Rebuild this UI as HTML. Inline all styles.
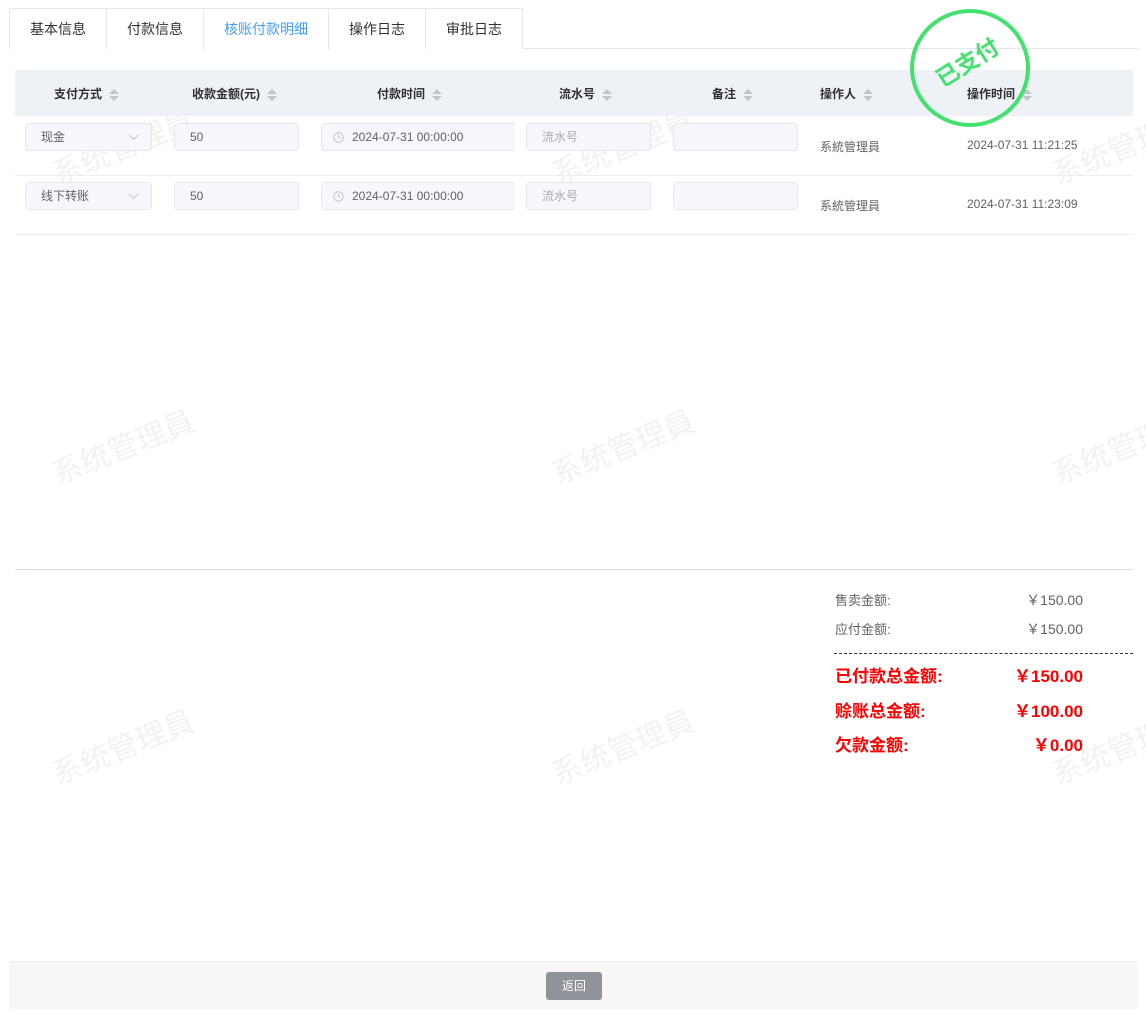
<!DOCTYPE html>
<html style="width:1146px;height:1019px;overflow:hidden"><head><meta charset="utf-8"><style>
*{box-sizing:border-box;margin:0;padding:0}
body{width:1146px;height:1019px;background:#fff;font-family:"Liberation Sans","Noto Sans CJK SC",sans-serif;position:relative;overflow:hidden;color:#606266;font-size:12px}
.abs{position:absolute}
.tab{position:absolute;top:8px;height:41px;border:1px solid #e4e7ed;border-bottom:none;font-size:14px;color:#303133;line-height:40px;text-align:center;background:#fff}
.hd{position:absolute;top:70px;left:15px;width:1118px;height:46px;background:#eef1f6}
.ht{position:absolute;top:85px;font-weight:bold;color:#303133;font-size:12px;white-space:nowrap}
.sort{display:inline-block;vertical-align:middle;margin-left:7px;width:10px;height:14px;position:relative}
.sort:before{content:"";position:absolute;left:0;top:1px;border:5px solid transparent;border-bottom-color:#c0c4cc;border-top:none}
.sort:after{content:"";position:absolute;left:0;top:8px;border:5px solid transparent;border-top-color:#c0c4cc;border-bottom:none}
.in{position:absolute;height:28px;border:1px solid #e4e7ed;border-radius:4px;background:#f5f7fa;line-height:26px;padding-left:15px;color:#606266}
.line{position:absolute;left:15px;width:1118px;height:1px;background:#ebeef5}
.wm{position:absolute;font-size:30px;color:#f2f2f2;transform:translate(-50%,-50%) rotate(-22deg);white-space:nowrap}
.lab{position:absolute;left:835px;font-size:13px;color:#606266}
.val{position:absolute;right:63px;font-size:14px;color:#606266}
.rl{position:absolute;left:835px;font-size:17px;font-weight:bold;color:#f00}
.rv{position:absolute;right:63px;font-size:17px;font-weight:bold;color:#f00}
.chev{position:absolute;right:12px;top:9px}
</style></head><body>
<div class="wm" style="left:122px;top:145px">系统管理員</div>
<div class="wm" style="left:622px;top:145px">系统管理員</div>
<div class="wm" style="left:1122px;top:145px">系统管理員</div>
<div class="wm" style="left:122px;top:445px">系统管理員</div>
<div class="wm" style="left:622px;top:445px">系统管理員</div>
<div class="wm" style="left:1122px;top:445px">系统管理員</div>
<div class="wm" style="left:122px;top:745px">系统管理員</div>
<div class="wm" style="left:622px;top:745px">系统管理員</div>
<div class="wm" style="left:1122px;top:745px">系统管理員</div>

<div class="abs" style="left:9px;top:48px;width:1129px;height:1px;background:#e4e7ed"></div>
<div class="tab" style="left:9px;width:98px">基本信息</div>
<div class="tab" style="left:106px;width:98px">付款信息</div>
<div class="tab" style="left:203px;width:126px;color:#409eff;height:42px">核账付款明细</div>
<div class="tab" style="left:328px;width:98px">操作日志</div>
<div class="tab" style="left:425px;width:98px">审批日志</div>

<div class="hd"></div>
<div class="ht" style="left:54px">支付方式<span class="sort"></span></div>
<div class="ht" style="left:192px">收款金额(元)<span class="sort"></span></div>
<div class="ht" style="left:377px">付款时间<span class="sort"></span></div>
<div class="ht" style="left:559px">流水号<span class="sort"></span></div>
<div class="ht" style="left:712px">备注<span class="sort"></span></div>
<div class="ht" style="left:820px">操作人<span class="sort"></span></div>
<div class="ht" style="left:967px">操作时间<span class="sort"></span></div>

<div class="in" style="left:25px;top:123px;width:127px">现金<svg class="chev" width="11" height="8" viewBox="0 0 11 8"><path d="M1 2l4.5 4.5L10 2" fill="none" stroke="#c0c4cc" stroke-width="1"/></svg></div>
<div class="in" style="left:174px;top:123px;width:125px">50</div>
<div class="in" style="left:321px;top:123px;width:194px;padding-left:30px;border-right:none;border-radius:4px 0 0 4px"><svg style="position:absolute;left:11px;top:8px" width="11" height="11" viewBox="0 0 11 11"><circle cx="5.5" cy="5.5" r="4.8" fill="none" stroke="#c0c4cc"/><path d="M5.5 2.8v3h2" fill="none" stroke="#c0c4cc"/></svg>2024-07-31 00:00:00</div>
<div class="in" style="left:526px;top:123px;width:125px;color:#a8abb2">流水号</div>
<div class="in" style="left:673px;top:123px;width:125px"></div>
<div class="abs" style="left:820px;top:138px">系統管理員</div>
<div class="abs" style="left:967px;top:138px">2024-07-31 11:21:25</div>
<div class="line" style="top:175px"></div>

<div class="in" style="left:25px;top:182px;width:127px">线下转账<svg class="chev" width="11" height="8" viewBox="0 0 11 8"><path d="M1 2l4.5 4.5L10 2" fill="none" stroke="#c0c4cc" stroke-width="1"/></svg></div>
<div class="in" style="left:174px;top:182px;width:125px">50</div>
<div class="in" style="left:321px;top:182px;width:194px;padding-left:30px;border-right:none;border-radius:4px 0 0 4px"><svg style="position:absolute;left:11px;top:8px" width="11" height="11" viewBox="0 0 11 11"><circle cx="5.5" cy="5.5" r="4.8" fill="none" stroke="#c0c4cc"/><path d="M5.5 2.8v3h2" fill="none" stroke="#c0c4cc"/></svg>2024-07-31 00:00:00</div>
<div class="in" style="left:526px;top:182px;width:125px;color:#a8abb2">流水号</div>
<div class="in" style="left:673px;top:182px;width:125px"></div>
<div class="abs" style="left:820px;top:197px">系統管理員</div>
<div class="abs" style="left:967px;top:197px">2024-07-31 11:23:09</div>
<div class="line" style="top:234px"></div>

<div class="abs" style="left:910px;top:9px;width:120px;height:118px;border:4px solid #45e170;border-radius:50%"></div>
<div class="abs" style="left:932px;top:44px;font-size:23px;font-weight:bold;color:#45e170;transform:rotate(-32deg);white-space:nowrap">已支付</div>

<div class="abs" style="left:15px;top:569px;width:1118px;height:1px;background:#dcdfe6"></div>
<div class="lab" style="top:590px">售卖金额:</div><div class="val" style="top:590px">￥150.00</div>
<div class="lab" style="top:619px">应付金额:</div><div class="val" style="top:619px">￥150.00</div>
<div class="abs" style="left:834px;top:653px;width:299px;border-top:1px dashed #333"></div>
<div class="rl" style="top:662px">已付款总金额:</div><div class="rv" style="top:662px">￥150.00</div>
<div class="rl" style="top:697px">赊账总金额:</div><div class="rv" style="top:697px">￥100.00</div>
<div class="rl" style="top:731px">欠款金额:</div><div class="rv" style="top:731px">￥0.00</div>

<div class="abs" style="left:9px;top:961px;width:1129px;height:48px;background:#f7f7f7;border-top:1px solid #eee"></div>
<div class="abs" style="left:546px;top:972px;width:56px;height:28px;background:#909399;border-radius:3px;color:#fff;text-align:center;line-height:28px;font-size:12px">返回</div>
</body></html>
